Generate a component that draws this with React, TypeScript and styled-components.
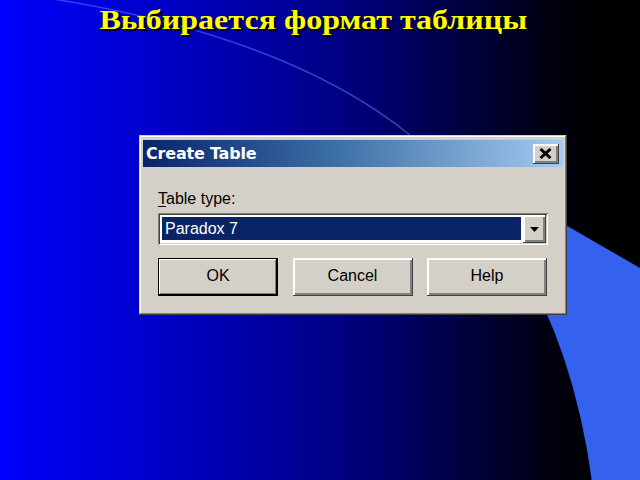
import React from "react";
import styled, { createGlobalStyle } from "styled-components";

const GlobalStyle = createGlobalStyle`
  html, body {
    margin: 0;
    padding: 0;
    background: #000;
    overflow: hidden;
  }
`;

const Slide = styled.div`
  position: relative;
  width: 640px;
  height: 480px;
  overflow: hidden;
  background: linear-gradient(
    90deg,
    #0000ff 0%,
    #0000f0 5%,
    #0000c8 25%,
    #000098 45%,
    #00006a 61%,
    #00003a 74%,
    #000010 86%,
    #000000 95%
  );
`;

const Backdrop = styled.svg`
  position: absolute;
  left: 0;
  top: 0;
  width: 640px;
  height: 480px;
`;

const Content = styled.div`
  position: relative;
  display: flex;
  flex-direction: column;
`;

const Title = styled.h1`
  margin: 0;
  padding-top: 3px;
  height: 33px;
  line-height: 34px;
  text-align: center;
  padding-right: 14px;
  font-family: "Liberation Serif", "Times New Roman", serif;
  font-weight: bold;
  font-size: 27px;
  color: #ffff00;
  text-shadow: 2px 2px 1px #000020;
`;

const Stretched = styled.span`
  display: inline-block;
  transform: scaleX(1.186);
`;

const Dialog = styled.div`
  margin: 99px 0 0 139px;
  width: 428px;
  height: 180px;
  box-sizing: border-box;
  padding: 5px 4px 4px 4px;
  background: #d4d0c8;
  display: flex;
  flex-direction: column;
  box-shadow: inset -1px -1px #404040, inset 1px 1px #d4d0c8,
    inset -2px -2px #808080, inset 2px 2px #ffffff;
`;

const TitleBar = styled.div`
  height: 27px;
  display: flex;
  align-items: center;
  justify-content: space-between;
  padding: 0 4px 0 3px;
  background: linear-gradient(90deg, #0a246a 0%, #3a6ea5 45%, #a6caf0 100%);
  color: #ffffff;
  font-family: "DejaVu Sans", Verdana, sans-serif;
  font-weight: bold;
  font-size: 16px;
  letter-spacing: -0.2px;
`;

const RaisedButton = styled.button`
  box-sizing: border-box;
  border: 0;
  padding: 0;
  margin: 0;
  background: #d4d0c8;
  color: #000;
  display: flex;
  align-items: center;
  justify-content: center;
  box-shadow: inset -1px -1px #404040, inset 2px 2px #ffffff,
    inset -3px -3px #808080;
`;

const CloseButton = styled(RaisedButton)`
  width: 26px;
  height: 20px;
  padding: 0 1px 1px 0;
`;

const Body = styled.div`
  flex: 1;
  padding: 23px 15px 0 15px;
  display: flex;
  flex-direction: column;
  font-family: "Liberation Sans", Arial, sans-serif;
  font-size: 16px;
  color: #000;
`;

const Label = styled.div`
  height: 18px;
  line-height: 18px;
`;

const Mnemonic = styled.span`
  text-decoration: underline;
  text-underline-offset: 2px;
`;

const Combo = styled.div`
  margin-top: 5px;
  height: 32px;
  box-sizing: border-box;
  padding: 4px;
  display: flex;
  gap: 2px;
  background: #ffffff;
  box-shadow: inset 1px 1px #808080, inset -1px -1px #ffffff,
    inset 2px 2px #404040, inset -2px -2px #d4d0c8;
`;

const Selection = styled.div`
  flex: 1;
  background: #0a2465;
  color: #ffffff;
  display: flex;
  align-items: center;
  padding-left: 3px;
  margin-bottom: 1px;
`;

const ArrowButton = styled(RaisedButton)`
  width: 23px;
  margin: -2px -2px -2px 0;
`;

const ButtonRow = styled.div`
  margin-top: 13px;
  display: grid;
  grid-template-columns: repeat(3, 120px);
  column-gap: 14.5px;
`;

const PushButton = styled(RaisedButton)<{ $default?: boolean }>`
  height: 38px;
  font-family: "Liberation Sans", Arial, sans-serif;
  font-size: 16px;
  padding-bottom: 2px;
  box-shadow: ${(p) =>
    p.$default
      ? "inset 0 0 0 1px #000, inset -2px -2px #000, inset 2px 2px #ffffff, inset -3px -3px #808080"
      : "inset -1px -1px #404040, inset 2px 2px #ffffff, inset -3px -3px #808080"};
`;

const CloseGlyph = () => (
  <svg width="13" height="11" viewBox="0 0 13 11">
    <path d="M1.5 1 L11.5 10 M11.5 1 L1.5 10" stroke="#000" strokeWidth="3" />
  </svg>
);

const DownArrow = () => (
  <svg width="9" height="5" viewBox="0 0 9 5">
    <path d="M0 0 H9 L4.5 5 Z" fill="#000" />
  </svg>
);

export default function App() {
  return (
    <>
      <GlobalStyle />
      <Slide>
        <Backdrop viewBox="0 0 640 480">
          <path d="M410 135 Q562 255 592 482 L640 482 L640 268 Z" fill="#3461ee" />
          <path
            d="M20 -6 Q280 30 410 135"
            fill="none"
            stroke="#5a86ff"
            strokeOpacity="0.5"
            strokeWidth="1.5"
          />
        </Backdrop>
        <Content>
          <Title>
            <Stretched>Выбирается формат таблицы</Stretched>
          </Title>
          <Dialog>
            <TitleBar>
              <span>Create Table</span>
              <CloseButton>
                <CloseGlyph />
              </CloseButton>
            </TitleBar>
            <Body>
              <Label>
                <Mnemonic>T</Mnemonic>able type:
              </Label>
              <Combo>
                <Selection>Paradox 7</Selection>
                <ArrowButton>
                  <DownArrow />
                </ArrowButton>
              </Combo>
              <ButtonRow>
                <PushButton $default>OK</PushButton>
                <PushButton>Cancel</PushButton>
                <PushButton>Help</PushButton>
              </ButtonRow>
            </Body>
          </Dialog>
        </Content>
      </Slide>
    </>
  );
}
